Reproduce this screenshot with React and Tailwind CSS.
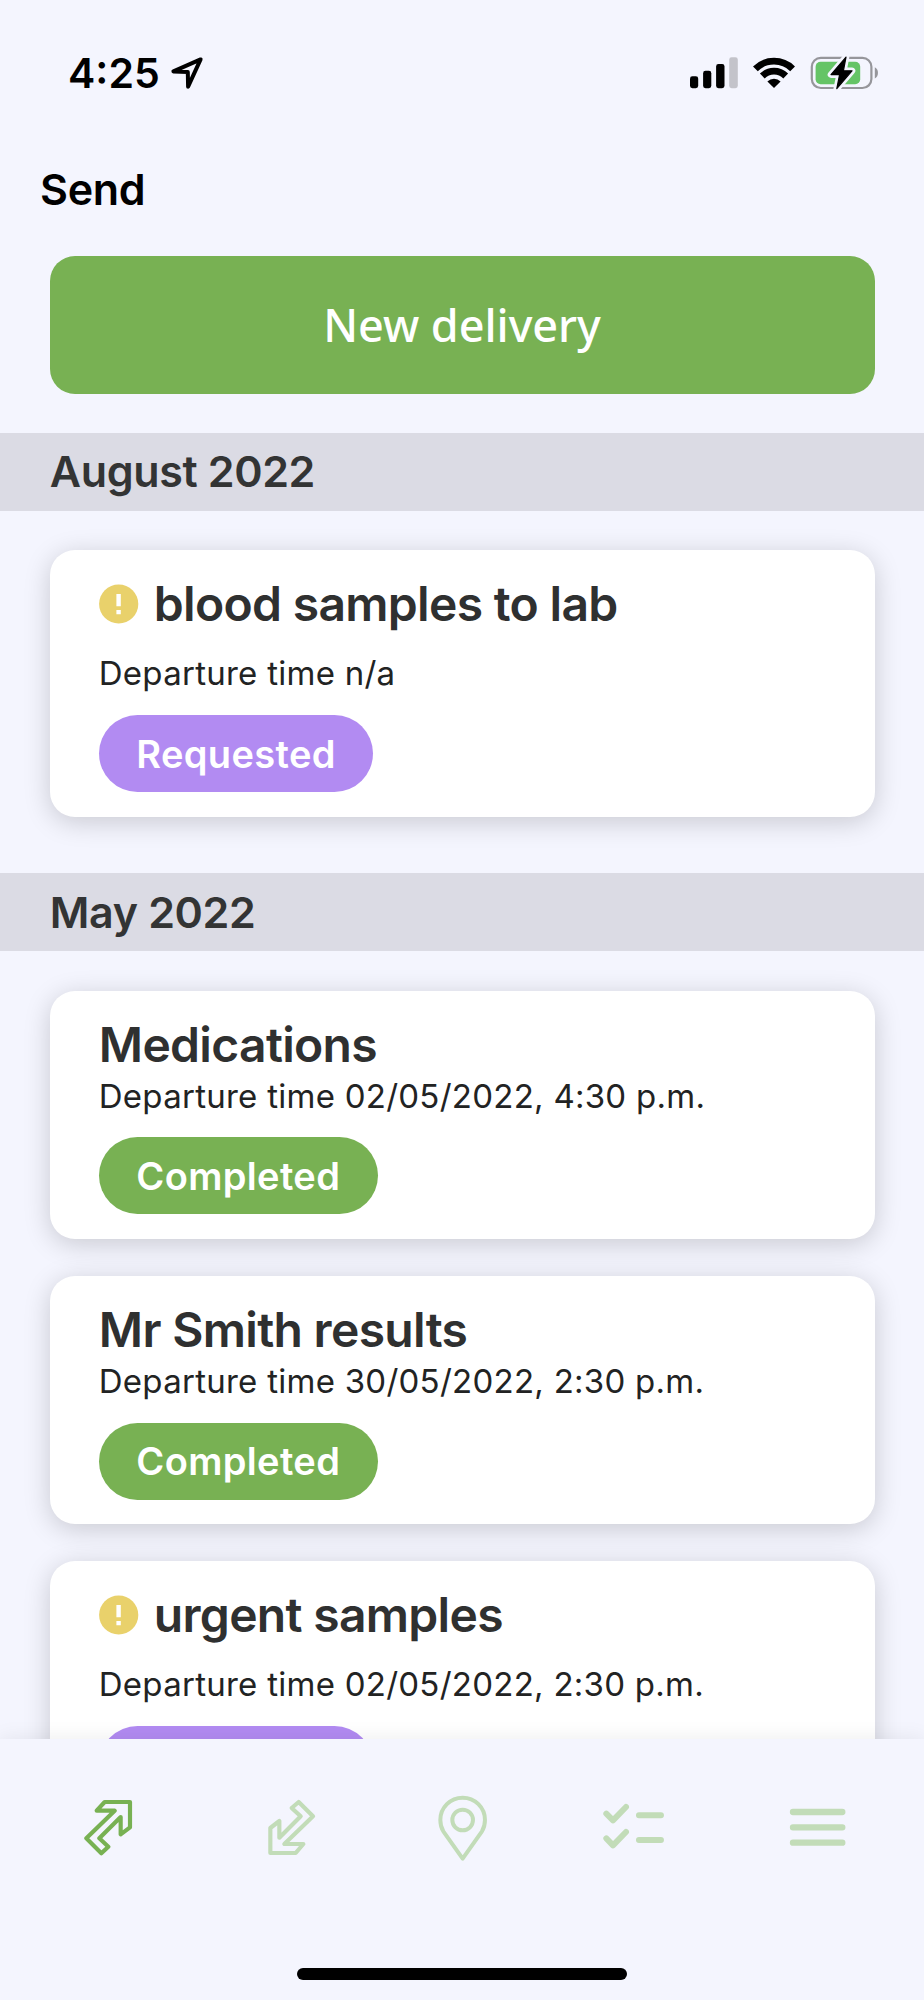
/* data ------------------------------------------------ */
const sections = [
  {
    month: "August 2022",
    items: [{ title: "blood samples to lab", departure: "n/a", status: "Requested", alert: true }],
  },
  {
    month: "May 2022",
    items: [
      { title: "Medications", departure: "02/05/2022, 4:30 p.m.", status: "Completed" },
      { title: "Mr Smith results", departure: "30/05/2022, 2:30 p.m.", status: "Completed" },
      { title: "urgent samples", departure: "02/05/2022, 2:30 p.m.", status: "Requested", alert: true },
    ],
  },
];

/* status bar ------------------------------------------ */
function StatusBar() {
  return (
    <div className="flex h-[146px] shrink-0 items-center pl-[68px] pr-[44px] text-black">
      <span className="text-[41px] leading-none font-semibold">4:25</span>

      {/* location arrow */}
      <svg className="ml-[10px] h-[34px] w-[34px]" viewBox="0 0 34 34" fill="none" stroke="currentColor" strokeWidth="4" strokeLinejoin="round">
        <path d="M30.6 3.4 3.4 15.4l14.4.7.3 14.6z" />
      </svg>

      {/* signal */}
      <svg className="ml-auto h-[34px] w-[48px]" viewBox="690 56 48 34">
        <rect x="690" y="76.3" width="8.2" height="11.9" rx="2.4" />
        <rect x="703.1" y="70.8" width="8.2" height="17.4" rx="2.4" />
        <rect x="716.1" y="64" width="8.4" height="24.2" rx="2.4" />
        <rect x="729.2" y="57.3" width="8.6" height="30.9" rx="2.4" fill="#c3c3ca" />
      </svg>

      {/* wifi */}
      <svg className="ml-[15px] h-[34px] w-[42px]" viewBox="753 56 42 34" fill="none" stroke="currentColor" strokeWidth="6.8">
        <path d="M755.4 68.8a26.5 26.5 0 0 1 37.2 0" />
        <path d="M762.3 76a16.7 16.7 0 0 1 23.4 0" />
        <path d="M774 88l-6.6-6.6a9.4 9.4 0 0 1 13.2 0z" fill="currentColor" stroke="none" />
      </svg>

      {/* battery */}
      <svg className="ml-[15px] h-[36px] w-[70px]" viewBox="810 55 70 36">
        <rect x="811.8" y="57.8" width="59.6" height="30.2" rx="9" fill="none" stroke="#96969b" strokeWidth="2.2" />
        <path d="M874.8 67.3c4.2 1.6 4.2 9.6 0 11.2z" fill="#96969b" />
        <rect x="815.6" y="61.7" width="44.6" height="22.6" rx="5" fill="#65c466" />
        <path
          d="M846 57.2l-15 17.4h8.6l-2.8 14 15.2-17.8h-8.6z"
          stroke="#f4f5fe"
          strokeWidth="6.6"
          strokeLinejoin="round"
        />
        <path d="M846 57.2l-15 17.4h8.6l-2.8 14 15.2-17.8h-8.6z" stroke="currentColor" strokeWidth="1.2" strokeLinejoin="round" />
      </svg>
    </div>
  );
}

/* cards ----------------------------------------------- */
function AlertIcon() {
  return (
    <svg className="mr-[15px] h-[40px] w-[40px] shrink-0" viewBox="0 0 40 40">
      <circle cx="19.7" cy="20" r="19.6" fill="#e9d16b" />
      <path d="M17.4 10h4.4v12.2h-4.4zM17.4 26h4.4v4.2h-4.4z" fill="#fff" />
    </svg>
  );
}

function StatusPill({ status }) {
  const color = status === "Completed" ? "bg-[#78b153]" : "bg-[#b28bf2]";
  return (
    <span
      className={`${color} flex h-[77px] w-fit items-center rounded-full px-[37.5px] text-[38px] leading-none font-semibold tracking-[0.36px] text-white`}
    >
      {status}
    </span>
  );
}

function DeliveryCard({ item }) {
  return (
    <article className="rounded-[25px] bg-white px-[49.3px] pt-[25.5px] pb-[24.5px] shadow-[0_5px_27px_rgba(0,0,0,0.18)]">
      <div className="flex h-[57.5px] items-center">
        {item.alert && <AlertIcon />}
        <h3 className="text-[48px] leading-none font-semibold tracking-[-0.68px] text-[#2f3030]">{item.title}</h3>
      </div>
      <p
        className={`${
          item.alert ? "mt-[18.3px]" : "mt-0"
        } mb-[19.7px] h-[44px] text-[33px] leading-[44px] tracking-[0.26px] whitespace-nowrap text-[#222323]`}
      >
        Departure time {item.departure}
      </p>
      <StatusPill status={item.status} />
    </article>
  );
}

/* bottom tabs ----------------------------------------- */
function TabBar() {
  return (
    <nav className="relative flex h-[261px] shrink-0 flex-col items-center bg-[#f4f5fe] shadow-[0_0_20px_rgba(0,0,0,0.08)]">
      <div className="flex h-[177px] w-full items-center pl-[83.8px] text-[#c2dcb8]">
        <svg className="h-[58.7px] w-[50px] text-[#78b153]" viewBox="70 84 150 176" fill="none" stroke="currentColor" strokeWidth="12.5" strokeLinejoin="round">
          <path d="M132 96H208V172L180 193V141L116 205L143 230L122 250L77 205L162 122H108Z" />
        </svg>
        <svg className="ml-[132px] h-[58.7px] w-[50.7px]" viewBox="616 84 152 176" fill="none" stroke="currentColor" strokeWidth="12.5" strokeLinejoin="round">
          <path d="M714 96L757 139L671 222H728L705 249H629V174L656 153V203L720 139L693 114Z" />
        </svg>
        <svg className="ml-[120.2px] h-[67.3px] w-[51.3px]" viewBox="50 70 154 202" fill="none" stroke="currentColor" strokeWidth="12" strokeLinejoin="round">
          <path d="M127 264L69 182C63 172 60 160 60 148A67 67 0 0 1 194 148C194 160 191 172 185 182Z" />
          <circle cx="127" cy="148" r="31" />
        </svg>
        <svg className="mt-[-3px] ml-[115.3px] h-[46px] w-[61.3px]" viewBox="550 98 184 138" fill="none" stroke="currentColor" strokeWidth="18" strokeLinecap="round" strokeLinejoin="round">
          <path d="M560 130L580 150L619 110M560 204L580 225L619 185M658 135H724M658 209H724" />
        </svg>
        <svg className="ml-[124px] h-[38.7px] w-[57.3px]" viewBox="86 264 172 116" fill="none" stroke="currentColor" strokeWidth="19" strokeLinecap="round">
          <path d="M98 276H246M98 322H246M98 368H246" />
        </svg>
      </div>
      <div className="mt-[52px] h-[12px] w-[330px] rounded-full bg-black" />
    </nav>
  );
}

/* screen ---------------------------------------------- */
export default function App() {
  return (
    <div className="flex h-[2000px] w-[924px] flex-col overflow-hidden bg-[#f4f5fe] font-['Inter',sans-serif]">
      <StatusBar />

      <header className="flex h-[109.5px] shrink-0 items-center pb-[23.5px] pl-[40px]">
        <h1 className="text-[43px] leading-none font-semibold tracking-[-0.3px] text-black">Send</h1>
      </header>

      <main className="min-h-0 flex-1 overflow-hidden">
        <div className="px-[49.5px]">
          <button className="flex h-[138px] w-full items-center justify-center rounded-[25px] bg-[#78b153] font-['Noto_Sans',sans-serif] text-[45px] leading-none font-medium tracking-[-0.05px] text-white">
            New delivery
          </button>
        </div>

        {sections.map((section, i) => (
          <section key={section.month} className={i === 0 ? "mt-[39.2px]" : "mt-[56.7px]"}>
            <h2 className="flex h-[78px] items-center bg-[#dbdbe4] pl-[49.8px] text-[43px] leading-none font-semibold tracking-[-0.36px] text-[#333434]">
              {section.month}
            </h2>
            <div className="flex flex-col gap-[37px] px-[49.5px] pt-[39.4px]">
              {section.items.map((item) => (
                <DeliveryCard key={item.title} item={item} />
              ))}
            </div>
          </section>
        ))}
      </main>

      <TabBar />
    </div>
  );
}
